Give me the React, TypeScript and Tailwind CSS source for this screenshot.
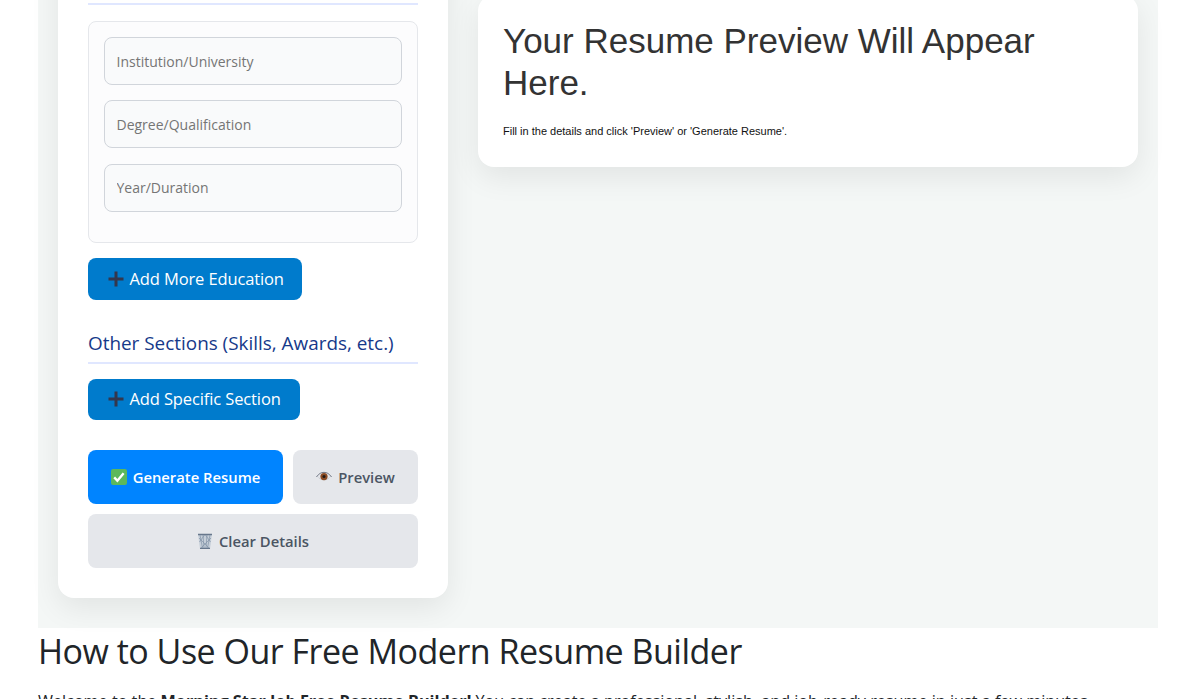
const uiFont = "font-['Open_Sans',sans-serif]";

function PlusIcon() {
  return (
    <svg width="16" height="16" viewBox="0 0 16 16" className="shrink-0">
      <path d="M6.5 0.5h3v6h6v3h-6v6h-3v-6h-6v-3h6z" fill="#33374d" />
    </svg>
  );
}

function CheckIcon() {
  return (
    <svg width="16" height="16" viewBox="0 0 16 16" className="shrink-0">
      <rect width="16" height="16" rx="2" fill="#5cb85c" />
      <path d="M3.2 8.4l3.2 3.4 6.2-7.6" fill="none" stroke="#fff" strokeWidth="2.4" />
    </svg>
  );
}

function EyeIcon() {
  return (
    <svg width="16" height="12" viewBox="0 0 16 12" className="shrink-0">
      <path d="M0.5 6C3 2.4 5.4 1.4 8 1.4S13 2.4 15.5 6" fill="none" stroke="#6b7280" strokeWidth="1" />
      <path d="M2.5 6.4C5 9.6 11 9.6 13.5 6.4" fill="none" stroke="#c4c7cc" strokeWidth="1" />
      <circle cx="8" cy="5.6" r="3.6" fill="#8a4b24" />
      <circle cx="8" cy="5.6" r="1.5" fill="#1f1a17" />
    </svg>
  );
}

function TrashIcon() {
  return (
    <svg width="16" height="16" viewBox="0 0 16 16" className="shrink-0">
      <path d="M1 1h14l-2 15H3z" fill="#c5ced8" />
      <path d="M1 1.5h14M3 15.5h10" stroke="#67778c" strokeWidth="1.4" />
      <path d="M3 2l2.5 13M6 2l1 13M10 2l-1 13M13 2l-2.5 13M2 5l10 10M14 5L4 15M2.5 9l5-7M13.5 9l-5-7" stroke="#8293a8" strokeWidth="0.7" fill="none" />
    </svg>
  );
}

function Field({ placeholder }: { placeholder: string }) {
  return (
    <input
      placeholder={placeholder}
      className="w-full h-[48px] px-[11.5px] bg-[#f9fafb] border border-[#d1d5db] rounded-lg text-[14px] text-[#374151] placeholder:text-[#757575] outline-none"
    />
  );
}

function SectionHeading({ children }: { children: string }) {
  return (
    <h3 className="text-[#16398a] text-[18.9px] leading-[26px] pb-[6px] border-b-2 border-[#e0e7ff]">
      {children}
    </h3>
  );
}

function AddButton({ label, className }: { label: string; className: string }) {
  return (
    <button className={`flex items-center gap-[5.5px] px-5 bg-[#007bcc] text-white text-[16.5px] tracking-[-0.12px] whitespace-nowrap rounded-lg ${className}`}>
      <PlusIcon />
      {label}
    </button>
  );
}

export default function App() {
  return (
    <div className={`h-[699px] overflow-hidden bg-white ${uiFont}`}>
      <section className="ml-[38px] w-[1120px] -mt-[79px] flex items-start gap-[30px] bg-[#f4f7f6] px-5 pt-5 pb-[30px]">
        {/* form */}
        <div className="w-[390px] shrink-0 bg-white rounded-2xl p-[30px] shadow-[0_10px_30px_rgba(0,0,0,0.08)]">
          <SectionHeading>Education</SectionHeading>
          <div className="mt-4 flex flex-col gap-[15.4px] px-[15px] pt-[15px] pb-[30.2px] bg-[#fcfcfd] border border-[#e5e7eb] rounded-lg">
            <Field placeholder="Institution/University" />
            <Field placeholder="Degree/Qualification" />
            <Field placeholder="Year/Duration" />
          </div>
          <AddButton label="Add More Education" className="mt-[15px] h-[42px] w-[214px]" />
          <div className="mt-[30px]">
            <SectionHeading>Other Sections (Skills, Awards, etc.)</SectionHeading>
          </div>
          <AddButton label="Add Specific Section" className="mt-[15px] h-[41px] w-[212px]" />
          <div className="mt-[30px] flex gap-[10px]">
            <button className="flex-1 h-[54px] flex items-center justify-center gap-[6px] bg-[#0084ff] text-white text-[14.8px] font-semibold rounded-lg">
              <CheckIcon />
              Generate Resume
            </button>
            <button className="w-[125px] h-[54px] flex items-center justify-center gap-[6px] bg-[#e5e7eb] text-[#4b5563] text-[14.8px] font-semibold rounded-lg">
              <EyeIcon />
              Preview
            </button>
          </div>
          <button className="mt-[10px] w-full h-[54px] flex items-center justify-center gap-[6px] bg-[#e5e7eb] text-[#4b5563] text-[14.8px] font-semibold rounded-lg">
            <TrashIcon />
            Clear Details
          </button>
        </div>

        {/* preview */}
        <div className="flex-1 mt-[54px] bg-white rounded-2xl px-[25px] pt-[25px] pb-[30px] h-[172px] shadow-[0_10px_30px_rgba(0,0,0,0.08)] font-['Liberation_Sans',sans-serif]">
          <h1 className="text-[35px] leading-[42px] text-[#333333]">Your Resume Preview Will Appear Here.</h1>
          <p className="mt-[20px] text-[11px] leading-[14px] text-[#111111]">
            Fill in the details and click 'Preview' or 'Generate Resume'.
          </p>
        </div>
      </section>

      <div className="ml-[38px] w-[1120px]">
        <h2 className="text-[34px] leading-[46px] tracking-[-0.5px] text-[#212529]">How to Use Our Free Modern Resume Builder</h2>
        <p className="mt-[15px] text-[16.2px] leading-[24px] text-[#212529]">
          Welcome to the <strong>Morning Star Job Free Resume Builder!</strong> You can create a professional, stylish, and job-ready resume in just a few minutes.
        </p>
      </div>
    </div>
  );
}
